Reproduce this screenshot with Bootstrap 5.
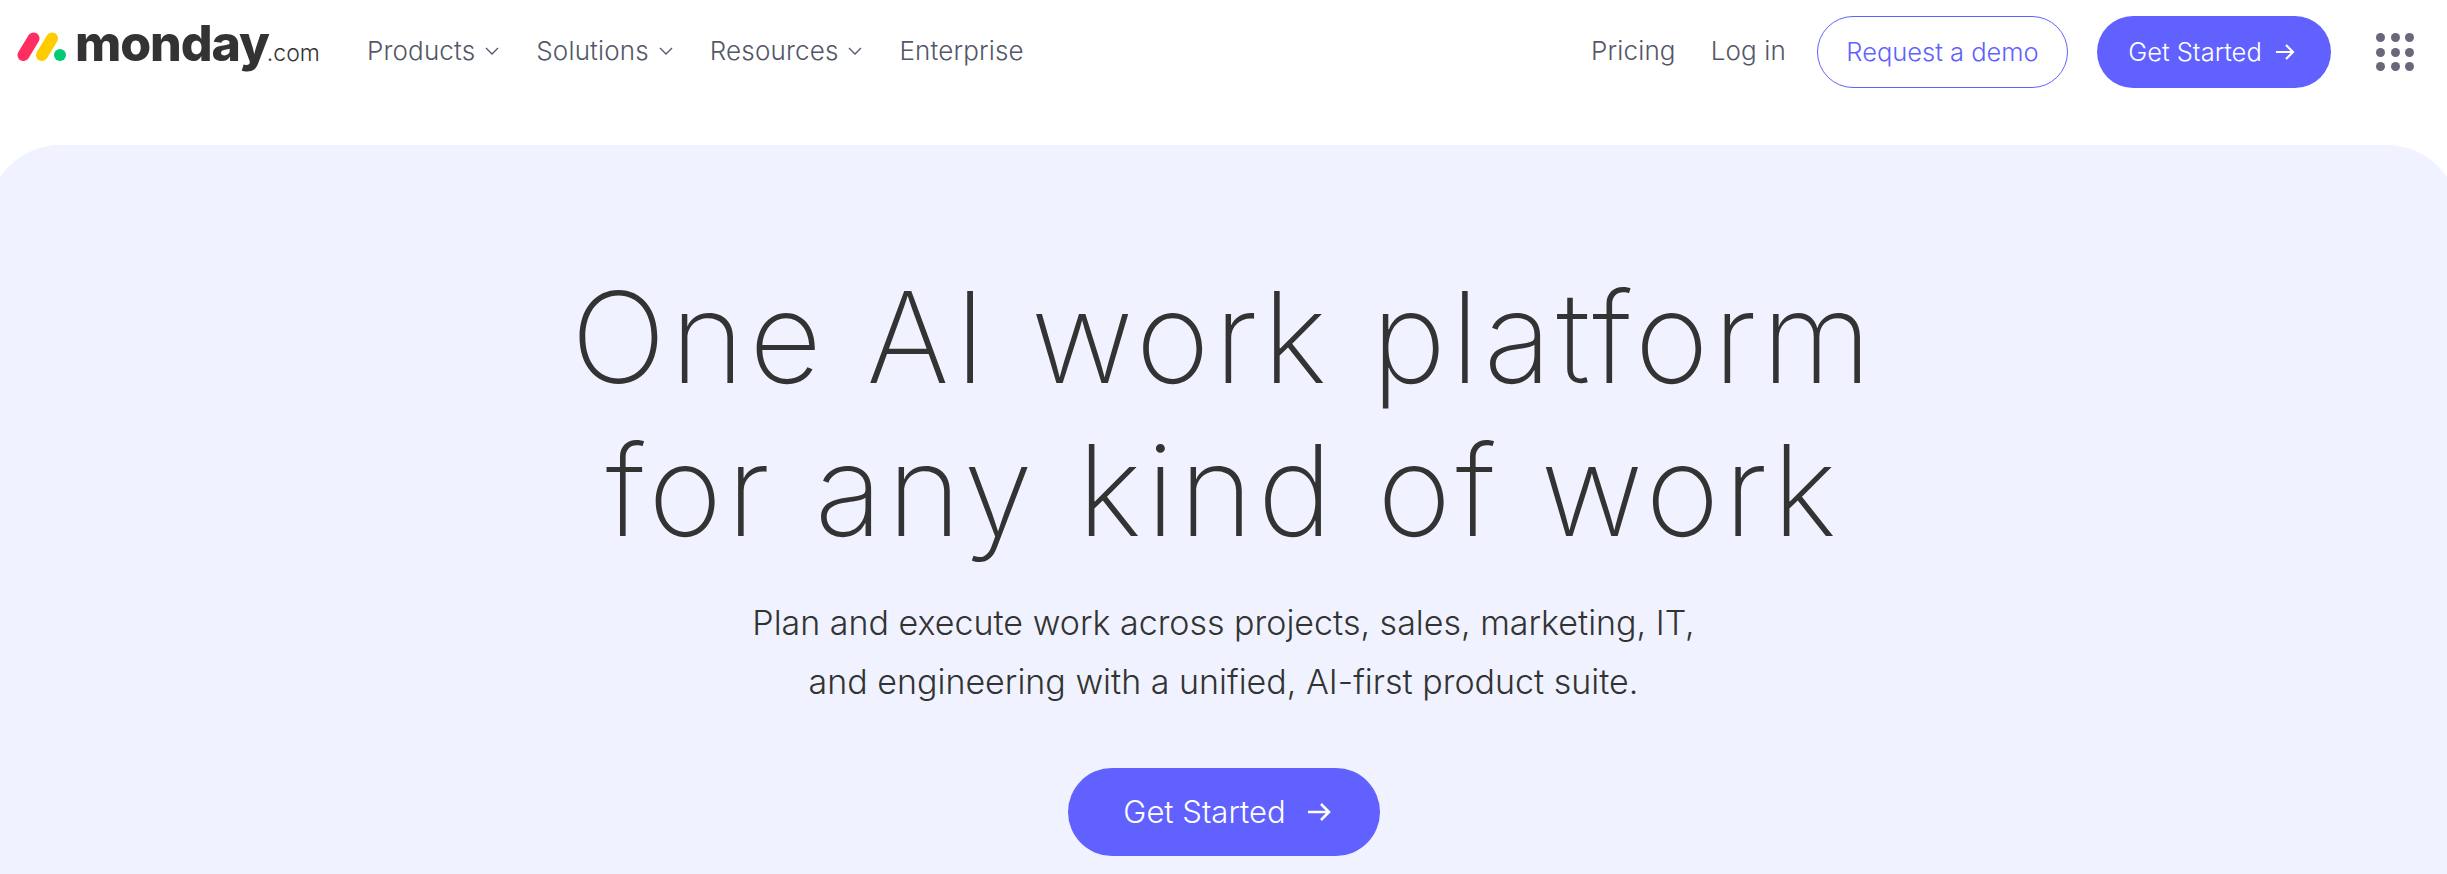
<!DOCTYPE html>
<html lang="en">
<head>
    <meta charset="UTF-8">
    <meta name="viewport" content="width=device-width, initial-scale=1.0">
    <title>monday.com</title>
    <link href="https://cdn.jsdelivr.net/npm/bootstrap@5.3.1/dist/css/bootstrap.min.css" rel="stylesheet">
    <style>
        html, body {
            height: 874px;
            overflow: hidden;
        }

        body {
            background: #fff;
            color: #333;
            font-family: Inter, "Noto Sans", sans-serif;
            font-weight: 300;
        }

        .top-bar {
            height: 145px;
            padding: 16px 33px 0 17px;
            align-items: flex-start;
        }

        .brand-link {
            height: 54px;
            width: 303px;
            color: #333;
            text-decoration: none;
        }

        .brand-link svg {
            margin-top: 7px;
            flex: none;
        }

        .brand-word {
            font-size: 50px;
            font-weight: 800;
            letter-spacing: -1.1px;
            line-height: 1;
            margin-left: 9px;
        }

        .brand-tld {
            font-size: 23px;
            font-weight: 300;
            align-self: flex-end;
            margin-left: -2px;
        }

        .menu-link {
            color: #535768;
            font-size: 26px;
            letter-spacing: .15px;
            text-decoration: none;
            line-height: 69px;
            height: 69px;
            white-space: nowrap;
        }

        .menu-left {
            margin-left: 47px;
            gap: 36px;
        }

        .menu-left .menu-link {
            gap: 9px;
        }

        .menu-right {
            gap: 29px;
        }

        .login-link {
            margin-left: 6px;
        }

        .pill-outline,
        .pill-solid {
            height: 72px;
            border-radius: 36px;
            font-size: 25.500px;
            font-weight: 300;
            padding: 0;
        }

        .pill-outline {
            width: 251px;
            color: #6161ff;
            border: 1px solid #6161ff;
            background: #fff;
            margin-left: 2px;
        }

        .pill-solid {
            width: 234px;
            color: #fff;
            background: #6161ff;
            border: 0;
            gap: 13px;
            padding-right: 5px;
        }

        .dots-grid {
            display: grid;
            grid-template-columns: repeat(3, 9px);
            gap: 5.500px;
            margin-left: 16px;
            align-self: center;
        }

        .dots-grid span {
            width: 9px;
            height: 9px;
            border-radius: 50%;
            background: #676879;
        }

        .hero-panel {
            height: 729px;
            margin: 0 -12px;
            background: #f0f3ff;
            border-radius: 72px 72px 0 0;
            padding-top: 116px;
        }

        .hero-title {
            font-size: 126px;
            font-weight: 200;
            letter-spacing: 4.700px;
            line-height: 153px;
            color: #333;
            margin: 0;
        }

        .hero-text {
            font-size: 34px;
            line-height: 59px;
            margin: 26px 0 0;
        }

        .pill-big {
            width: 312px;
            height: 88px;
            border-radius: 44px;
            background: #6161ff;
            color: #fff;
            border: 0;
            font-size: 31px;
            font-weight: 300;
            gap: 21px;
            margin-top: 57px;
            padding: 0 0 0 7px;
        }
    </style>
</head>
<body>
    <nav class="top-bar d-flex">
        <a class="brand-link d-flex align-items-center" href="#">
            <svg width="49" height="29" viewBox="0 0 49 29">
                <line x1="6.500" y1="23" x2="16.500" y2="6.500" stroke="#ff2d60" stroke-width="12" stroke-linecap="round"/>
                <line x1="25" y1="23" x2="35" y2="6.500" stroke="#ffcc00" stroke-width="12" stroke-linecap="round"/>
                <circle cx="43" cy="23" r="6" fill="#00ca72"/>
            </svg>
            <span class="brand-word">monday</span><span class="brand-tld">.com</span>
        </a>
        <div class="menu-left d-flex">
            <a class="menu-link d-flex align-items-center" href="#">Products
                <svg width="16" height="10" viewBox="0 0 16 10"><path d="M2 2l6 6 6-6" fill="none" stroke="#535768" stroke-width="1.300"/></svg>
            </a>
            <a class="menu-link d-flex align-items-center" href="#">Solutions
                <svg width="16" height="10" viewBox="0 0 16 10"><path d="M2 2l6 6 6-6" fill="none" stroke="#535768" stroke-width="1.300"/></svg>
            </a>
            <a class="menu-link d-flex align-items-center" href="#">Resources
                <svg width="16" height="10" viewBox="0 0 16 10"><path d="M2 2l6 6 6-6" fill="none" stroke="#535768" stroke-width="1.300"/></svg>
            </a>
            <a class="menu-link d-flex align-items-center" href="#">Enterprise</a>
        </div>
        <div class="menu-right d-flex ms-auto">
            <a class="menu-link" href="#">Pricing</a>
            <a class="menu-link login-link" href="#">Log in</a>
            <button class="btn pill-outline" type="button">Request a demo</button>
            <button class="btn pill-solid d-flex align-items-center justify-content-center" type="button">Get Started
                <svg width="20" height="18" viewBox="0 0 20 18"><path d="M1 9h17M11 2l7 7-7 7" fill="none" stroke="#fff" stroke-width="2.200"/></svg>
            </button>
            <div class="dots-grid">
                <span></span><span></span><span></span>
                <span></span><span></span><span></span>
                <span></span><span></span><span></span>
            </div>
        </div>
    </nav>
    <main class="hero-panel d-flex flex-column align-items-center text-center">
        <h1 class="hero-title">One AI work platform<br>for any kind of work</h1>
        <p class="hero-text">Plan and execute work across projects, sales, marketing, IT,<br>and engineering with a unified, AI-first product suite.</p>
        <button class="btn pill-big d-flex align-items-center justify-content-center" type="button">Get Started
            <svg width="24" height="20" viewBox="0 0 24 20"><path d="M1 10h21M14 2l8 8-8 8" fill="none" stroke="#fff" stroke-width="2.600"/></svg>
        </button>
    </main>
    <script src="https://cdn.jsdelivr.net/npm/bootstrap@5.3.1/dist/js/bootstrap.bundle.min.js"></script>
</body>
</html>
